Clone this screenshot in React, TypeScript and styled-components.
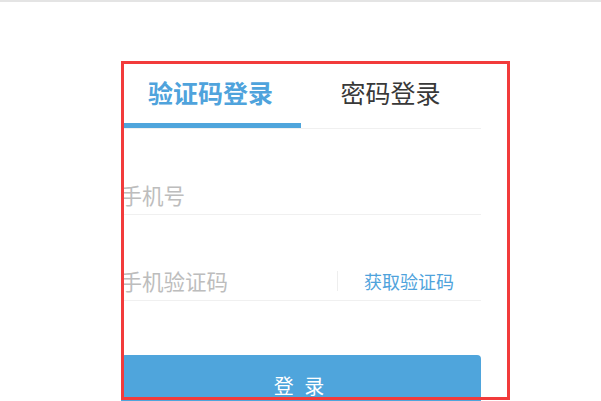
import styled, { createGlobalStyle } from 'styled-components';
import { useState } from 'react';

const GlobalStyle = createGlobalStyle`
  html, body {
    margin: 0;
    padding: 0;
    background: #fff;
    overflow: hidden;
  }
  body {
    font-family: "Noto Sans CJK SC", "Liberation Sans", sans-serif;
  }
  * {
    box-sizing: border-box;
  }
`;

const TopBar = styled.div`
  height: 2px;
  background: #e4e4e4;
`;

const Panel = styled.div`
  position: relative;
  width: 360px;
  margin: 59px auto 0;
`;

const Highlight = styled.div`
  position: absolute;
  left: 0;
  top: 0;
  width: 389px;
  height: 339px;
  border: 3px solid #f23b3b;
  pointer-events: none;
  z-index: 2;
`;

const Tabs = styled.div`
  display: flex;
  border-bottom: 1px solid #f0f0f0;
`;

const Tab = styled.div<{ $active: boolean }>`
  flex: 1;
  text-align: center;
  line-height: 62px;
  font-size: 25px;
  font-weight: ${p => (p.$active ? 700 : 400)};
  color: ${p => (p.$active ? '#4fa3dc' : '#383838')};
  border-bottom: 5px solid ${p => (p.$active ? '#4fa5dc' : 'transparent')};
  cursor: pointer;
`;

const Field = styled.div`
  display: flex;
  align-items: center;
  height: 40px;
  margin-top: 46px;
  border-bottom: 1px solid #f0f0f0;

  > input {
    flex: 1;
    min-width: 0;
    height: 100%;
    padding: 0;
    border: 0;
    outline: none;
    background: none;
    font-family: inherit;
    font-size: 21.5px;
    color: #333;

    &::placeholder {
      color: #bdbdbd;
    }
  }
`;

const CodeButton = styled.button`
  width: 144px;
  height: 20px;
  padding: 0;
  border: 0;
  border-left: 1px solid #eee;
  background: none;
  font-family: inherit;
  font-size: 18px;
  line-height: 20px;
  color: #4fa3dc;
  cursor: pointer;
`;

const Submit = styled.button`
  display: block;
  width: 100%;
  height: 60px;
  margin-top: 54px;
  border: 0;
  border-radius: 4px;
  background: #4fa5dc;
  color: #fff;
  font-family: inherit;
  font-size: 20px;
  letter-spacing: 3px;
  cursor: pointer;
`;

const tabs = ['验证码登录', '密码登录'];

export default function App() {
  const [current, setCurrent] = useState(0);
  return (
    <>
      <GlobalStyle />
      <TopBar />
      <Panel>
        <Highlight />
        <Tabs>
          {tabs.map((name, i) => (
            <Tab key={name} $active={current === i} onClick={() => setCurrent(i)}>
              {name}
            </Tab>
          ))}
        </Tabs>
        <Field>
          <input type="text" placeholder="手机号" />
        </Field>
        <Field>
          <input type="text" placeholder="手机验证码" />
          <CodeButton>获取验证码</CodeButton>
        </Field>
        <Submit>登 录</Submit>
      </Panel>
    </>
  );
}
